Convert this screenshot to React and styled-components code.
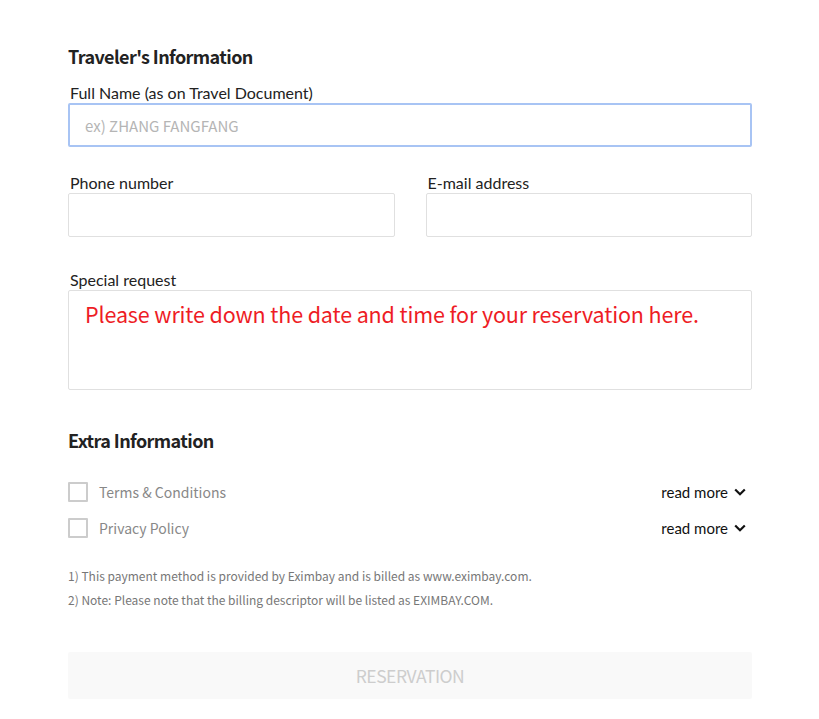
import React from 'react';
import styled, { createGlobalStyle } from 'styled-components';

const GlobalStyle = createGlobalStyle`
  body {
    margin: 0;
    background: #fff;
    font-family: "Noto Sans CJK KR", "Source Sans Pro", sans-serif;
  }
`;

const Page = styled.div`
  width: 684px;
  padding: 42px 0 0 68px;
`;

const SectionTitle = styled.h2`
  margin: 0;
  font-size: 18px;
  font-weight: 700;
  color: #222;
  letter-spacing: -0.6px;
  line-height: 28px;
`;

const Field = styled.div`
  margin-top: ${(p) => p.$top || '0px'};
  display: flex;
  flex-direction: column;
`;

const Label = styled.label`
  font-family: Lato, sans-serif;
  font-size: 16px;
  color: #222;
  line-height: 20px;
  padding-left: 2px;
  letter-spacing: 0;
`;

const Input = styled.input`
  box-sizing: border-box;
  width: 100%;
  height: 44px;
  border: ${(p) => (p.$focused ? '2px solid #a8c4f4' : '1px solid #e0e0e0')};
  border-radius: 2px;
  padding: 0 15px;
  font-family: "Noto Sans CJK KR", sans-serif;
  font-size: 15px;
  color: #333;
  outline: none;
  &::placeholder {
    color: #b5b5b5;
  }
`;

const Row = styled.div`
  display: grid;
  grid-template-columns: 1fr 1fr;
  column-gap: 31px;
  margin-top: 26px;
`;

const TextArea = styled.div`
  box-sizing: border-box;
  height: 100px;
  border: 1px solid #e0e0e0;
  border-radius: 2px;
  padding: 8px 16px;
  font-size: 21.5px;
  letter-spacing: -0.13px;
  color: #ee1c25;
  line-height: 30px;
`;

const ExtraTitle = styled(SectionTitle)`
  margin-top: 36px;
`;

const Agreements = styled.div`
  margin-top: 28px;
  display: flex;
  flex-direction: column;
  gap: 16px;
`;

const AgreeRow = styled.div`
  display: flex;
  align-items: center;
  justify-content: space-between;
  height: 20px;
`;

const CheckLabel = styled.label`
  display: flex;
  align-items: center;
  gap: 11px;
  font-size: 14px;
  color: #888;
`;

const Box = styled.span`
  box-sizing: border-box;
  width: 20px;
  height: 20px;
  border: 2px solid #ccc;
  border-radius: 1px;
`;

const ReadMore = styled.button`
  display: flex;
  align-items: center;
  gap: 6px;
  border: none;
  background: none;
  padding: 0 6px 0 0;
  font-family: Lato, sans-serif;
  font-size: 15px;
  color: #111;
  cursor: pointer;
`;

const Notes = styled.div`
  margin-top: 26px;
  font-size: 12px;
  color: #777;
  line-height: 24px;
`;

const Submit = styled.button`
  margin-top: 40px;
  width: 100%;
  height: 47px;
  border: none;
  border-radius: 2px;
  background: #f9f9f9;
  color: #cdcdcd;
  font-family: "Noto Sans CJK KR", sans-serif;
  font-size: 17.5px;
  letter-spacing: -0.5px;
`;

const Chevron = () => (
  <svg width="12" height="8" viewBox="0 0 12 8">
    <path d="M1.2 1.5 L6 6.2 L10.8 1.5" fill="none" stroke="#111" strokeWidth="2.2" />
  </svg>
);

const agreements = ['Terms & Conditions', 'Privacy Policy'];

export default function App() {
  return (
    <>
      <GlobalStyle />
      <Page>
        <SectionTitle>Traveler's Information</SectionTitle>
        <Field $top="13px">
          <Label>Full Name (as on Travel Document)</Label>
          <Input $focused placeholder="ex) ZHANG FANGFANG" />
        </Field>
        <Row>
          <Field>
            <Label>Phone number</Label>
            <Input />
          </Field>
          <Field>
            <Label>E-mail address</Label>
            <Input />
          </Field>
        </Row>
        <Field $top="33px">
          <Label>Special request</Label>
          <TextArea>Please write down the date and time for your reservation here.</TextArea>
        </Field>
        <ExtraTitle>Extra Information</ExtraTitle>
        <Agreements>
          {agreements.map((a) => (
            <AgreeRow key={a}>
              <CheckLabel>
                <Box />
                {a}
              </CheckLabel>
              <ReadMore>
                read more <Chevron />
              </ReadMore>
            </AgreeRow>
          ))}
        </Agreements>
        <Notes>
          1) This payment method is provided by Eximbay and is billed as www.eximbay.com.
          <br />
          2) Note: Please note that the billing descriptor will be listed as EXIMBAY.COM.
        </Notes>
        <Submit>RESERVATION</Submit>
      </Page>
    </>
  );
}
